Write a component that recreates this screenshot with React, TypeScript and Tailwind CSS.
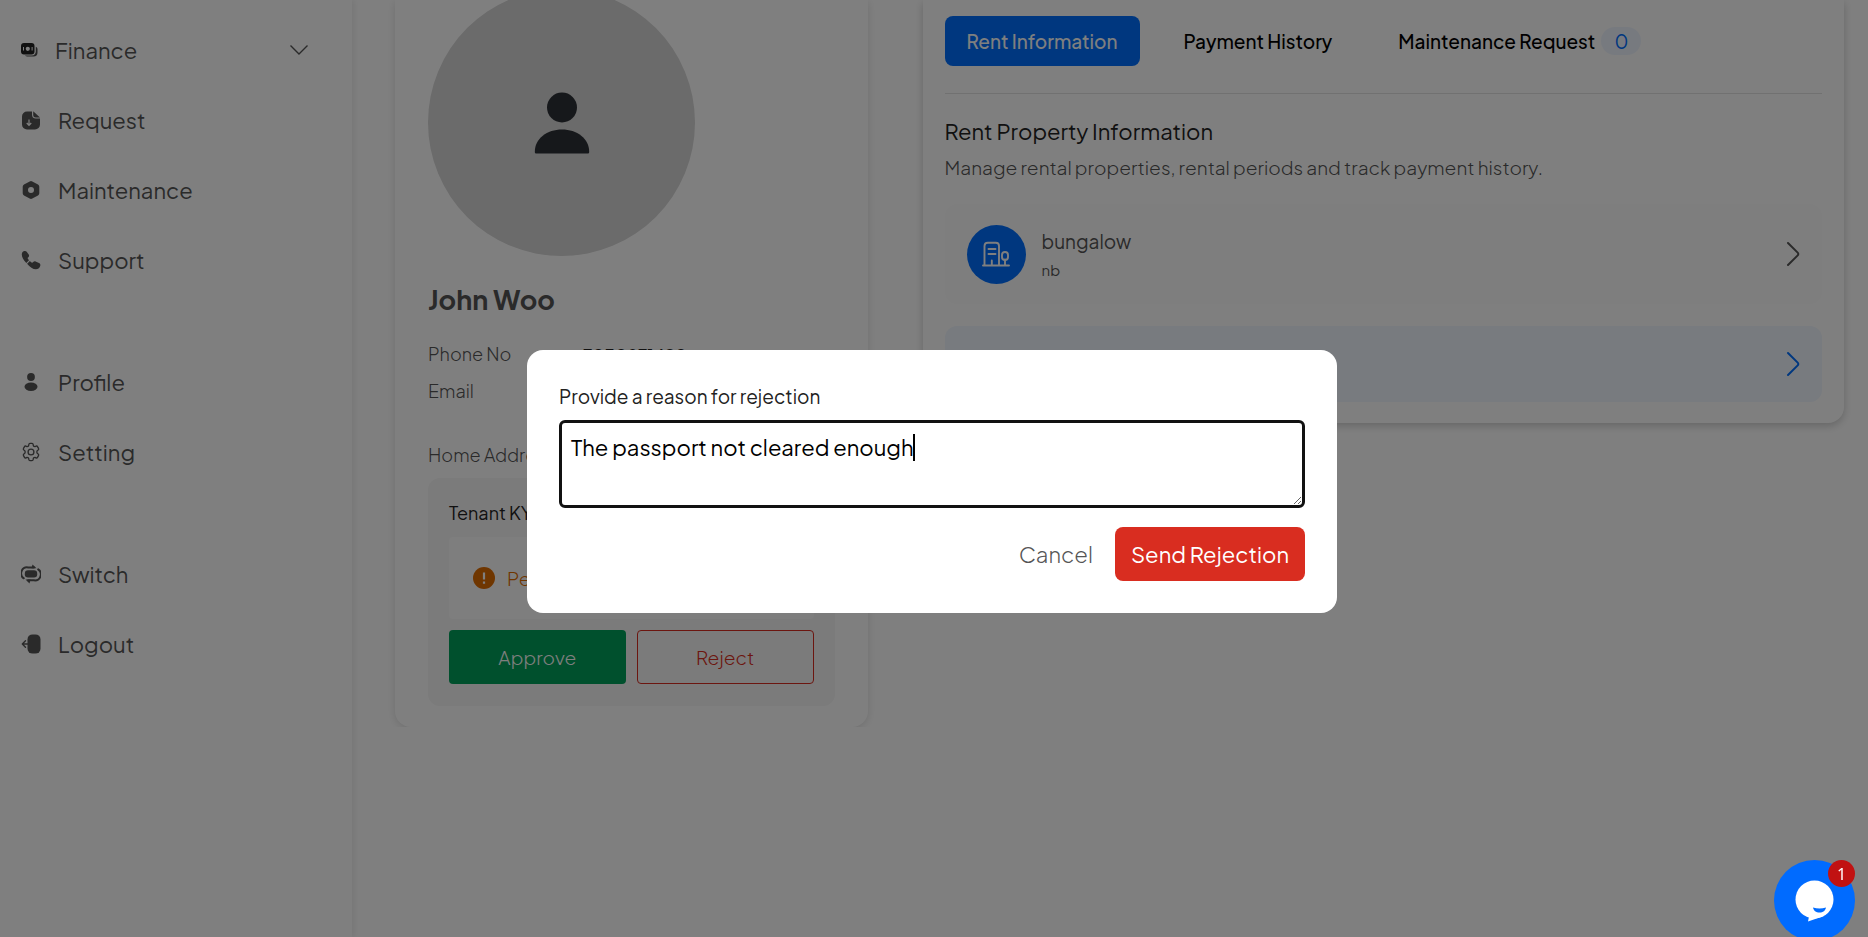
import { useEffect, useLayoutEffect, useRef, useState } from "react";
import type { ReactNode } from "react";

const Icon = ({ children }: { children: ReactNode }) => (
  <svg viewBox="0 0 20 20" className="w-5 h-5" fill="currentColor" aria-hidden="true">
    {children}
  </svg>
);

const FinanceIcon = () => (
  <Icon>
    <path
      fillRule="evenodd"
      d="M4 3h7.500a3 3 0 0 1 3 3v5.500a3 3 0 0 1-3 3H4a3 3 0 0 1-3-3V6a3 3 0 0 1 3-3ZM7.800 6.700a2.100 2.100 0 1 0 0 4.200 2.100 2.100 0 0 0 0-4.200ZM3 7v3.600h1V7H3Zm8.600 0v3.600h1V7h-1Z"
    />
    <path
      d="M15.800 6.700c1.200.6 1.700 1.500 1.700 2.600v3.200a4 4 0 0 1-4 4H8.200c-1.600 0-2.600-.4-3.200-1.100h7c2.400 0 3.800-1.500 3.800-3.900V6.700Z"
      opacity=".8"
    />
  </Icon>
);

const RequestIcon = () => (
  <Icon>
    <path
      fillRule="evenodd"
      d="M6 1.500h5v3.200c0 2.400 1.300 3.800 3.800 3.800H19V14.500a5 5 0 0 1-5 5H6a5 5 0 0 1-5-5v-8a5 5 0 0 1 5-5ZM7.400 9.500v4.300l-1.200-1.200-.9.900L8 16.200l2.700-2.700-.9-.9-1.200 1.200V9.500H7.400Z"
    />
    <path d="M12.200 1.200 19 7.500h-4.200c-1.800 0-2.600-1-2.600-2.700V1.200Z" />
  </Icon>
);

const MaintenanceIcon = () => (
  <Icon>
    <path
      fillRule="evenodd"
      d="M8.700 1.400a2.600 2.600 0 0 1 2.600 0l5.700 3.200a2.500 2.500 0 0 1 1.300 2.200v6.400a2.500 2.500 0 0 1-1.300 2.200l-5.700 3.200a2.600 2.600 0 0 1-2.600 0L3 15.400a2.500 2.500 0 0 1-1.300-2.200V6.800A2.500 2.500 0 0 1 3 4.600l5.700-3.200ZM10 7a3 3 0 1 0 0 6 3 3 0 0 0 0-6Z"
    />
  </Icon>
);

const SupportIcon = () => (
  <Icon>
    <path d="M2.600 1.300c1.200-.7 2.400-.5 3.100.4l2 2.900c.6.900.5 1.800-.3 2.600l-.9.800c.4 1 1 1.800 1.500 2.300L5.300 13C2.300 9.800.8 7 .8 4.400c0-1.400.6-2.400 1.800-3.100Z" />
    <path d="M6.100 13.700 8.900 10.900c.8.900 1.600 1.500 2.400 1.900l.9-.9c.7-.7 1.600-.9 2.400-.5l3.400 1.600c1.300.7 1.700 1.800 1.200 3.100-.8 2.100-2.200 3.200-4.300 3.200-2.900 0-6.100-2.100-8.800-5.600Z" />
  </Icon>
);

const ProfileIcon = () => (
  <Icon>
    <circle cx="10" cy="5" r="3.900" />
    <ellipse cx="10" cy="14.800" rx="6.500" ry="4.200" />
  </Icon>
);

const SettingIcon = () => (
  <svg viewBox="0 0 24 24" className="w-5 h-5" fill="none" stroke="currentColor" strokeWidth="1.600" strokeLinejoin="round" aria-hidden="true">
    <path d="M9.400 3c.1-.8.700-1.300 1.400-1.300h2.400c.7 0 1.300.5 1.400 1.300l.2 1.200c.1.400.4.800.8 1 .4.300.9.300 1.300.2l1.100-.4c.7-.3 1.500 0 1.800.6l1.200 2.100c.4.600.2 1.400-.4 1.900l-.9.700c-.4.300-.6.700-.6 1.200v1c0 .5.200.9.600 1.200l.9.700c.6.500.8 1.300.4 1.900l-1.200 2.100c-.3.600-1.100.9-1.800.6l-1.100-.4c-.4-.1-.9-.1-1.300.2-.4.200-.7.600-.8 1l-.2 1.200c-.1.800-.7 1.300-1.400 1.300h-2.400c-.7 0-1.300-.5-1.400-1.300l-.2-1.200c-.1-.4-.4-.8-.8-1-.4-.3-.9-.3-1.300-.2l-1.100.4c-.7.300-1.500 0-1.800-.6L3 16.300c-.4-.6-.2-1.400.4-1.900l.9-.7c.4-.3.600-.7.600-1.200v-1c0-.5-.2-.9-.6-1.200l-.9-.7C2.800 9.100 2.600 8.300 3 7.700l1.200-2.100c.3-.6 1.100-.9 1.800-.6l1.100.4c.4.100.9.100 1.300-.2.400-.2.700-.6.800-1L9.400 3Z" />
    <circle cx="12" cy="12" r="3.500" />
  </svg>
);

const SwitchIcon = () => (
  <Icon>
    <rect x="3.800" y="6.200" width="12.400" height="7.200" rx="3.200" />
    <path d="M13 3.400H7A6 6 0 0 0 2.800 14.300M7 16.300h6a6 6 0 0 0 4.200-10.900" fill="none" stroke="currentColor" strokeWidth="2" strokeLinecap="round" />
    <path d="M11.500.6 15.500 4.200h-5ZM8.500 19.400 4.500 15.600h5Z" />
  </Icon>
);

const LogoutIcon = () => (
  <Icon>
    <rect x="6.500" y=".4" width="13" height="19.200" rx="5" />
    <path d="M7 10H1.500M4.500 6.800 1.300 10l3.200 3.200" fill="none" stroke="currentColor" strokeWidth="1.400" strokeLinecap="round" strokeLinejoin="round" />
  </Icon>
);

const ChevronRight = () => (
  <svg viewBox="0 0 14 26" className="w-[14px] h-[26px]" fill="none" stroke="currentColor" strokeWidth="2" strokeLinecap="round" strokeLinejoin="round" aria-hidden="true">
    <path d="m2 2 9.700 9.600c.8.800.8 2 0 2.800L2 24" />
  </svg>
);

const navGroups = [
  [
    { label: "Request", icon: <RequestIcon /> },
    { label: "Maintenance", icon: <MaintenanceIcon /> },
    { label: "Support", icon: <SupportIcon /> },
  ],
  [
    { label: "Profile", icon: <ProfileIcon /> },
    { label: "Setting", icon: <SettingIcon /> },
  ],
  [
    { label: "Switch", icon: <SwitchIcon /> },
    { label: "Logout", icon: <LogoutIcon /> },
  ],
];

function Sidebar() {
  return (
    <aside className="w-[352px] shrink-0 pt-[15px] text-[22px] text-[#555] shadow-[2px_0_6px_rgba(0,0,0,0.08)]">
      <nav className="flex flex-col gap-[52px]">
        {navGroups.map((group, i) => (
          <div key={i} className="flex flex-col">
            {i === 0 && (
              <button type="button" className="flex h-[70px] items-center gap-[15px] pl-5 pr-[43px]">
                <span className="text-[#222]">
                  <FinanceIcon />
                </span>
                Finance
                <svg viewBox="0 0 20 12" className="ml-auto h-3 w-5" fill="none" stroke="currentColor" strokeWidth="1.400" aria-hidden="true">
                  <path d="m1.500 1.500 8.500 8.500 8.500-8.500" />
                </svg>
              </button>
            )}
            {group.map((item) => (
              <a key={item.label} href="#" className="flex h-[70px] items-center gap-[17px] pl-[21px]">
                {item.icon}
                {item.label}
              </a>
            ))}
          </div>
        ))}
      </nav>
    </aside>
  );
}

function TenantCard({ onReject }: { onReject: () => void }) {
  return (
    <section className="rounded-b-2xl px-[33px] pb-[21px] shadow-[0_2px_8px_rgba(0,0,0,0.13)] [clip-path:inset(0_-12px)]">
      <div className="-mt-[11px] flex size-[267px] items-center justify-center rounded-full bg-[#d6d6d6]">
        <svg viewBox="0 0 56 62" className="h-[62px] w-14" fill="#2d3036" aria-hidden="true">
          <circle cx="28" cy="15.500" r="15" />
          <path d="M2.500 61.500c-1 0-1.700-.6-1.700-1.600C.8 46.500 13 37.500 28 37.500s27.200 9 27.200 22.400c0 1-.7 1.600-1.700 1.600Z" />
        </svg>
      </div>
      <h2 className="mt-6 text-[27px] leading-[38px] font-bold text-[#555]">John Woo</h2>
      <dl className="mt-[22px] grid grid-cols-[155px_1fr] gap-y-[9px] text-lg leading-7 font-light text-[#555]">
        <dt>Phone No</dt>
        <dd className="text-[17px] font-medium text-[#222]">7030871490</dd>
        <dt>Email</dt>
        <dd />
        <dt className="mt-[27px]">Home Address</dt>
        <dd />
      </dl>
      <div className="mt-[9px] rounded-xl bg-[#f6f6f6] px-[21px] pt-[21px] pb-[22px]">
        <h3 className="text-lg leading-7 text-[#222]">Tenant KYC</h3>
        <div className="mt-[10px] flex h-[82px] items-center gap-3 rounded bg-[#fdfdfd] pl-6 text-[19px] font-light text-[#df6c00]">
          <svg viewBox="0 0 22 22" className="size-[22px]" aria-hidden="true">
            <circle cx="11" cy="11" r="11" fill="#df6c00" />
            <path d="M11 5.500v7M11 14.500v2.200" stroke="#fff" strokeWidth="2.200" />
          </svg>
          Pending
        </div>
        <div className="mt-[11px] grid grid-cols-2 gap-[11px] text-[19px] font-light">
          <button type="button" className="h-[54px] rounded bg-[#00a05a] text-white">
            Approve
          </button>
          <button type="button" onClick={onReject} className="h-[54px] rounded border border-[#d92d20] text-[#d92d20]">
            Reject
          </button>
        </div>
      </div>
    </section>
  );
}

function RentCard() {
  return (
    <section className="rounded-b-2xl px-[22px] pt-4 pb-[21px] shadow-[0_3px_8px_rgba(0,0,0,0.2)]">
      <div className="flex gap-[22px] border-b border-[#e2e2e2] pb-[27px] text-[19px] font-medium text-black">
        <button type="button" className="h-[50px] rounded-lg bg-[#006fff] px-[22px] text-white">
          Rent Information
        </button>
        <button type="button" className="h-[50px] px-[22px]">
          Payment History
        </button>
        <button type="button" className="flex h-[50px] items-center gap-[6px] pl-[22px]">
          Maintenance Request
          <span className="flex h-7 w-10 items-center justify-center rounded-full bg-[#eff5ff] font-normal text-[#006fff]">0</span>
        </button>
      </div>
      <h2 className="mt-[21px] text-[22px] leading-8 text-[#222]">Rent Property Information</h2>
      <p className="mt-[6px] text-[19px] leading-7 font-light text-[#555]">
        Manage rental properties, rental periods and track payment history.
      </p>
      <a href="#" className="mt-[23px] flex h-[100px] items-center rounded-xl bg-[#fdfdfd] px-[22px] text-[#555]">
        <span className="flex size-[59px] items-center justify-center rounded-full bg-[#006fff] text-white">
          <svg viewBox="0 0 28 26" className="h-[26px] w-7" fill="none" stroke="currentColor" strokeWidth="1.900" strokeLinecap="round" strokeLinejoin="round" aria-hidden="true">
            <path d="M1 24.500h26M2.500 24.500V5c0-2 1.200-3.300 3.300-3.300h8c2 0 3.200 1.300 3.200 3.300v19.500M6.500 8h7M6.500 13h7M9.800 24.500v-5M23 24.500v-6" />
            <rect x="20" y="11" width="6" height="8" rx="3" />
          </svg>
        </span>
        <span className="ml-4 flex flex-col gap-[3px]">
          <span className="text-[19px] leading-7">bungalow</span>
          <span className="text-[15px] leading-6">nb</span>
        </span>
        <span className="ml-auto">
          <ChevronRight />
        </span>
      </a>
      <a href="#" aria-label="View details" className="mt-[22px] flex h-[76px] items-center justify-end rounded-xl bg-[#f0f6ff] px-[22px] text-[#006fff]">
        <ChevronRight />
      </a>
    </section>
  );
}

function ReasonField() {
  const [reason, setReason] = useState("The passport not cleared enough");
  const [caretX, setCaretX] = useState(0);
  const ref = useRef<HTMLTextAreaElement>(null);

  useEffect(() => {
    const el = ref.current;
    if (!el) return;
    el.focus();
    el.setSelectionRange(el.value.length, el.value.length);
  }, []);

  // thick caret that follows the end of the text
  useLayoutEffect(() => {
    const el = ref.current;
    const ctx = document.createElement("canvas").getContext("2d");
    if (!el || !ctx) return;
    const style = getComputedStyle(el);
    ctx.font = `${style.fontWeight} ${style.fontSize} ${style.fontFamily}`;
    setCaretX(Math.round(ctx.measureText(reason).width) + 12);
  }, [reason]);

  return (
    <div className="relative mt-[10px]">
      <textarea
        id="reason"
        ref={ref}
        value={reason}
        onChange={(e) => setReason(e.target.value)}
        className="block h-[88px] w-full resize-y rounded-md border-[3px] border-[#111] px-[9px] py-2 text-[22px] leading-8 text-black caret-transparent outline-none"
      />
      <span className="absolute top-[14px] h-[27px] w-[2px] bg-black" style={{ left: caretX }} />
    </div>
  );
}

function RejectionModal({ onClose }: { onClose: () => void }) {
  return (
    <div className="fixed inset-0 z-10 flex items-center justify-center bg-black/50 pt-[26px] pr-1">
      <div role="dialog" aria-modal="true" className="w-[810px] rounded-2xl bg-white p-8">
        <label htmlFor="reason" className="block text-[19px] leading-7 text-[#222]">
          Provide a reason for rejection
        </label>
        <ReasonField />
        <div className="mt-[19px] flex justify-end gap-[22px] text-[22px]">
          <button type="button" onClick={onClose} className="font-light text-[#555]">
            Cancel
          </button>
          <button type="button" onClick={onClose} className="h-[54px] rounded-lg bg-[#d92d20] px-4 text-white">
            Send Rejection
          </button>
        </div>
      </div>
    </div>
  );
}

function ChatWidget() {
  return (
    <button type="button" aria-label="Open chat" className="fixed right-[13px] -bottom-1 z-20 size-[81px] rounded-full bg-[#006bff]">
      <svg viewBox="0 0 81 81" aria-hidden="true">
        <circle cx="40.500" cy="39.500" r="19" fill="#fff" />
        <path d="M35 56.500 34 61.500 50 56Z" fill="#fff" />
        <path d="M39 47.500c4 1.200 9 1.200 13 0-.5 3-3 5-6.500 5s-6-2-6.500-5Z" fill="#006bff" />
      </svg>
      <span className="absolute top-0 right-0 flex size-[27px] items-center justify-center rounded-full bg-[#c11212] font-['Noto_Sans',sans-serif] text-base text-white">
        1
      </span>
    </button>
  );
}

export default function App() {
  const [rejecting, setRejecting] = useState(true);

  return (
    <div className="flex min-h-screen overflow-hidden bg-white font-['Plus_Jakarta_Sans','Inter',sans-serif]">
      <Sidebar />
      <main className="grid flex-1 grid-cols-[minmax(0,1fr)_minmax(0,1.95fr)] items-start gap-[55px] pr-6 pl-[43px]">
        <TenantCard onReject={() => setRejecting(true)} />
        <RentCard />
      </main>
      {rejecting && <RejectionModal onClose={() => setRejecting(false)} />}
      <ChatWidget />
    </div>
  );
}
